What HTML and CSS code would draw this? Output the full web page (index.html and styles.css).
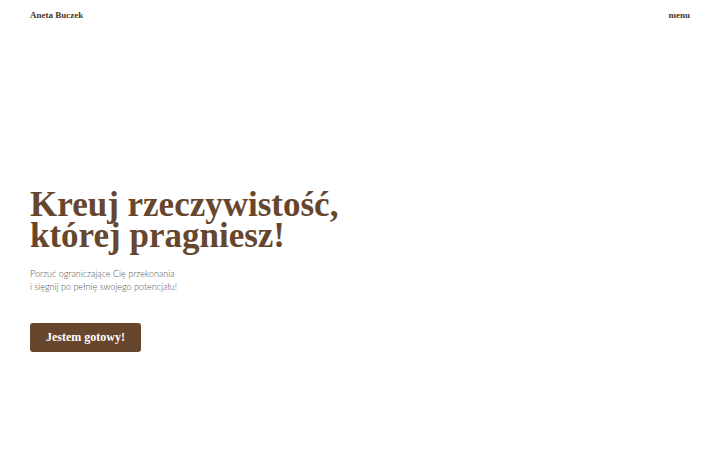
FILE: index.html
```
<!DOCTYPE html>
<html lang="pl">
<head>
    <meta charset="UTF-8">
    <meta name="viewport" content="width=device-width, initial-scale=1.0">
    <title>Aneta Buczek</title>
    <link rel="stylesheet" href="styles.css">
</head>
<body>
    <header class="header">
        <a class="logo" href="#">Aneta Buczek</a>
        <button class="menu-button" type="button">menu</button>
    </header>

    <main class="hero">
        <h1>Kreuj rzeczywistość,<br>której pragniesz!</h1>
        <p>Porzuć ograniczające Cię przekonania<br>i sięgnij po pełnię swojego potencjału!</p>
        <a class="cta" href="#">Jestem gotowy!</a>
    </main>
</body>
</html>
```
FILE: styles.css
```
* {
    margin: 0;
    padding: 0;
    box-sizing: border-box;
}

body {
    display: flex;
    flex-direction: column;
    min-height: 100vh;
    padding: 0 30px;
    font-family: 'Liberation Serif', serif;
    background-color: #fff;
    color: #67462e;
}

.header {
    display: flex;
    justify-content: space-between;
    align-items: center;
    height: 30px;
}

.logo,
.menu-button {
    font-family: inherit;
    font-size: 9px;
    font-weight: 700;
    line-height: 12px;
    color: #463526;
    text-decoration: none;
}

.menu-button {
    border: none;
    background: none;
    cursor: pointer;
}

.hero {
    flex: 1;
    display: flex;
    flex-direction: column;
    justify-content: center;
    align-items: flex-start;
    padding-top: 60px;
}

.hero h1 {
    margin-bottom: 16px;
    font-size: 35px;
    font-weight: 700;
    line-height: 31px;
}

.hero p {
    margin-bottom: 30px;
    font-family: Lato, sans-serif;
    font-size: 9px;
    font-weight: 300;
    line-height: 13px;
    color: #555;
}

.cta {
    padding: 8px 16px;
    border-radius: 3px;
    background-color: #67462e;
    font-size: 12px;
    font-weight: 700;
    line-height: 13px;
    color: #fff;
    text-decoration: none;
}
```
